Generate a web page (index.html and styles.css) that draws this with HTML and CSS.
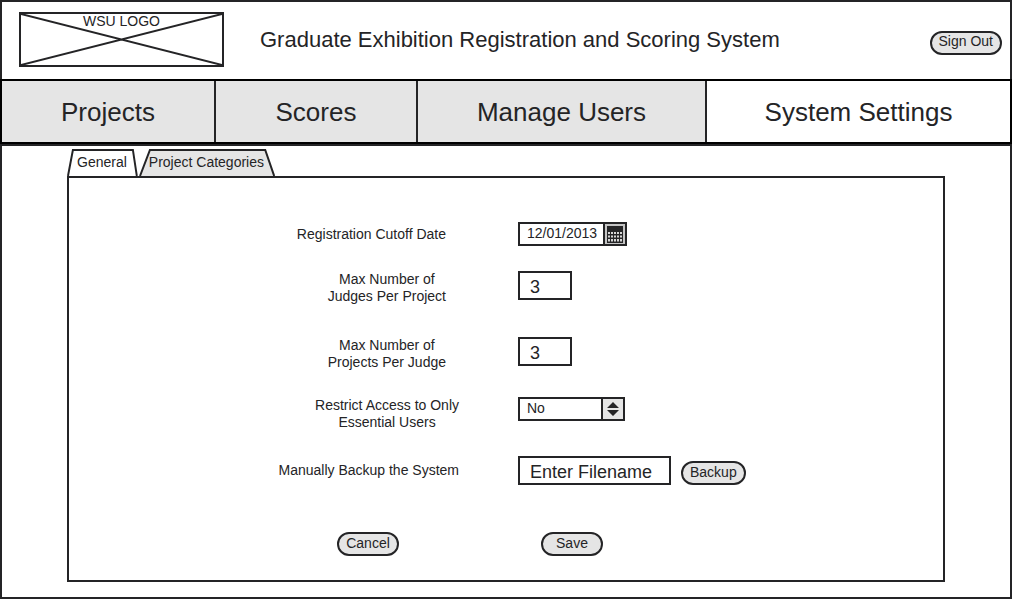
FILE: index.html
```html
<!DOCTYPE html>
<html lang="en">
<head>
<meta charset="utf-8">
<meta name="viewport" content="width=device-width, initial-scale=1">
<title>Graduate Exhibition Registration and Scoring System</title>
<link rel="stylesheet" href="styles.css">
</head>
<body>
<div class="page">
  <header class="header">
    <div class="logo">
      <svg class="logo-cross" viewBox="0 0 201 51" preserveAspectRatio="none" aria-hidden="true"><path d="M0 0L201 51M0 51L201 0"/></svg>
      <span class="logo-text">WSU LOGO</span>
    </div>
    <h1 class="title">Graduate Exhibition Registration and Scoring System</h1>
    <button class="pill sign-out" type="button">Sign Out</button>
  </header>

  <nav class="nav">
    <a class="nav-item" href="#projects">Projects</a>
    <a class="nav-item" href="#scores">Scores</a>
    <a class="nav-item" href="#users">Manage Users</a>
    <a class="nav-item nav-current" href="#settings" aria-current="page">System Settings</a>
  </nav>

  <main class="main">
    <div class="tabs" role="tablist">
      <button class="tab" type="button" role="tab" aria-selected="true">
        <svg class="tab-shape" viewBox="0 0 72 28" preserveAspectRatio="none" aria-hidden="true"><path d="M1 28L6 1H67L71 28"/></svg>
        <span class="tab-text">General</span>
      </button>
      <button class="tab tab-idle" type="button" role="tab" aria-selected="false">
        <svg class="tab-shape" viewBox="0 0 137 28" preserveAspectRatio="none" aria-hidden="true"><path d="M1 28L11 1H127L136 28"/></svg>
        <span class="tab-text">Project Categories</span>
      </button>
    </div>

    <form class="panel">
      <div class="row row-middle">
        <label class="label label-inset" for="cutoff">Registration Cutoff Date</label>
        <div class="date">
          <input class="date-input" id="cutoff" type="text" value="12/01/2013">
          <button class="date-button" type="button" aria-label="Open calendar">
            <svg class="date-icon" viewBox="0 0 16 17" aria-hidden="true">
              <path class="ink" d="M0 0H16V17H0Z"/>
              <path class="cells" d="M1 6h2v2H1zM4 6h2v2H4zM7 6h2v2H7zM10 6h2v2h-2zM13 6h2v2h-2zM1 9.500h2v2H1zM4 9.500h2v2H4zM7 9.500h2v2H7zM10 9.500h2v2h-2zM13 9.500h2v2h-2zM1 13h2v2.500H1zM4 13h2v2.500H4zM7 13h2v2.500H7zM10 13h2v2.500h-2zM13 13h2v2.500h-2z"/>
            </svg>
          </button>
        </div>
      </div>
      <div class="row">
        <label class="label label-inset" for="judges">Max Number of<br>Judges Per Project</label>
        <input class="box box-short" id="judges" type="text" inputmode="numeric" value="3">
      </div>
      <div class="row row-spaced">
        <label class="label label-inset" for="projects">Max Number of<br>Projects Per Judge</label>
        <input class="box box-short" id="projects" type="text" inputmode="numeric" value="3">
      </div>
      <div class="row">
        <label class="label" for="restrict">Restrict Access to Only<br>Essential Users</label>
        <div class="picker">
          <select class="picker-select" id="restrict"><option>No</option><option>Yes</option></select>
          <span class="picker-arrows"><svg viewBox="0 0 12 16" width="12" height="16" aria-hidden="true"><path class="ink" d="M0 7L6 1L12 7ZM0 9H12L6 15Z"/></svg></span>
        </div>
      </div>
      <div class="row row-middle">
        <label class="label" for="filename">Manually Backup the System</label>
        <div class="backup">
          <input class="box box-long" id="filename" type="text" placeholder="Enter Filename">
          <button class="pill" type="button">Backup</button>
        </div>
      </div>
      <div class="row actions">
        <button class="pill pill-wide cancel" type="reset">Cancel</button>
        <button class="pill pill-wide save" type="submit">Save</button>
      </div>
    </form>
  </main>
</div>
</body>
</html>
```
FILE: styles.css
```css
:root {
  --ink: #242426;
  --fill: #e5e5e5;
}

* {
  box-sizing: border-box;
}

body {
  margin: 0;
  background: #fff;
  color: var(--ink);
  font: 14px/17px "Liberation Sans", Arial, sans-serif;
}

button,
input,
select {
  margin: 0;
  border-radius: 0;
  color: inherit;
  font: inherit;
}

.page {
  border-bottom: 2px solid var(--ink);
}

.header {
  display: flex;
  align-items: center;
  height: 79px;
  padding: 0 8px 2px 17px;
  border: 2px solid var(--ink);
  border-bottom: 0;
}

.logo {
  position: relative;
  width: 205px;
  height: 55px;
  border: 2px solid var(--ink);
  line-height: 15px;
  text-align: center;
}

.logo-cross {
  position: absolute;
  inset: 0;
  width: 100%;
  height: 100%;
  stroke: var(--ink);
  stroke-width: 2;
}

.logo-text {
  position: relative;
}

.title {
  flex: 1;
  margin: 0 0 0 36px;
  font-size: 22px;
  font-weight: 400;
  line-height: 26px;
}

.pill {
  height: 24px;
  padding: 0 7px 2px;
  border: 2px solid var(--ink);
  border-radius: 12px;
  background: var(--fill);
  line-height: 17px;
}

.pill-wide {
  width: 62px;
}

.sign-out {
  margin-top: 6px;
}

.nav {
  display: grid;
  grid-template-columns: 214fr 202fr 289fr 303fr;
  height: 65px;
  border: 2px solid #000;
}

.nav-item {
  display: flex;
  align-items: center;
  justify-content: center;
  border-right: 2px solid var(--ink);
  background: var(--fill);
  color: inherit;
  font-size: 26px;
  line-height: 30px;
  text-decoration: none;
}

.nav-current {
  border-right: 0;
  background: #fff;
}

.main {
  padding: 3px 65px 15px;
  border: 2px solid var(--ink);
  border-bottom: 0;
}

.tabs {
  display: flex;
  gap: 1px;
}

.tab {
  position: relative;
  height: 27px;
  padding: 0 11px 0 10px;
  border: 0;
  background: none;
}

.tab-shape {
  position: absolute;
  inset: 0;
  width: 100%;
  height: 100%;
  fill: #fff;
  stroke: var(--ink);
  stroke-width: 2;
}

.tab-idle .tab-shape {
  fill: var(--fill);
}

.tab-text {
  position: relative;
}

.panel {
  padding: 44px 0 24px;
  border: 2px solid var(--ink);
}

.row {
  display: grid;
  grid-template-columns: 390fr 425fr;
  column-gap: 59px;
  align-items: start;
  margin-bottom: 25px;
}

.row-middle {
  align-items: center;
}

.row-spaced {
  margin: 32px 0 26px;
}

.label {
  justify-self: end;
  text-align: center;
}

.label-inset {
  margin-right: 13px;
}

.date,
.picker {
  display: flex;
  width: 109px;
  height: 24px;
  border: 2px solid var(--ink);
}

.date-input {
  flex: 1;
  min-width: 0;
  padding: 0 0 1px 7px;
  border: 0;
  background: #fff;
}

.date-button {
  display: grid;
  place-items: center;
  width: 22px;
  padding: 0;
  border: 0;
  border-left: 2px solid var(--ink);
  background: #c4c4c4;
}

.date-icon {
  width: 16px;
  height: 17px;
}

.ink {
  fill: var(--ink);
}

.cells {
  fill: #d6d6d6;
}

.box {
  height: 29px;
  padding: 3px 10px 0;
  border: 2px solid var(--ink);
  background: #fff;
  font-size: 18px;
}

.box::placeholder {
  color: inherit;
  opacity: 1;
}

.box-short {
  width: 54px;
}

.box-long {
  width: 153px;
}

.picker {
  position: relative;
  width: 107px;
}

.picker-select {
  width: 100%;
  padding: 0 24px 2px 7px;
  border: 0;
  appearance: none;
  background: #fff;
}

.picker-arrows {
  position: absolute;
  inset: 0 0 0 auto;
  display: grid;
  place-items: center;
  width: 22px;
  border-left: 2px solid var(--ink);
  background: var(--fill);
  pointer-events: none;
}

.backup {
  display: flex;
  align-items: end;
  gap: 10px;
}

.actions {
  margin: 47px 0 0;
}

.cancel {
  justify-self: end;
  margin-right: 60px;
}

.save {
  margin-left: 23px;
}
```
